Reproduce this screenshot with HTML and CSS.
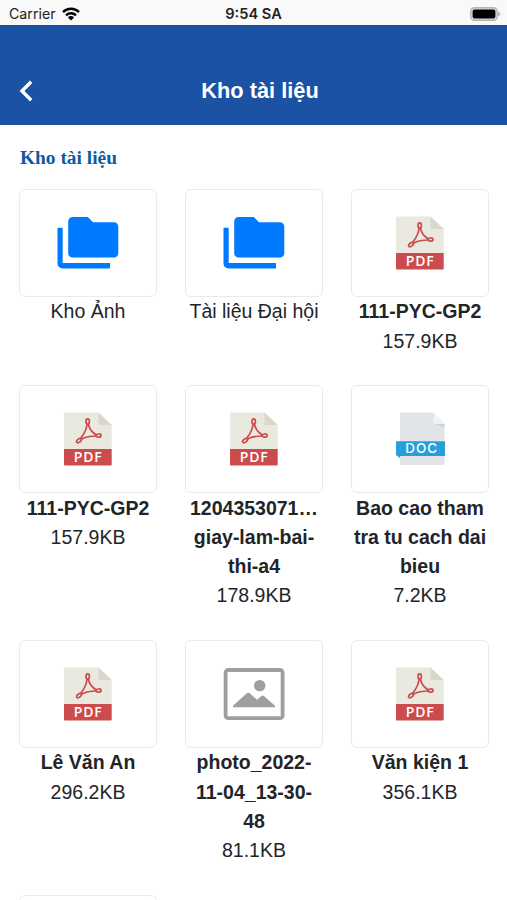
FILE: index.html
```html
<!DOCTYPE html>
<html lang="vi">
    <head>
        <title>Kho tài liệu</title>
        <meta charset="UTF-8">
        <meta name="viewport" content="width=device-width, initial-scale=1.0">
        <link rel="stylesheet" href="styles.css">
    </head>
    <body>
        <!-- shared icons -->
        <svg class="sprite">
            <symbol id="folder" viewBox="0 0 64 64">
                <path fill="#007bff" d="M16.5 6h15.3l5.2 5.3h21a4.3 4.3 0 0 1 4.3 4.3v26.7a4.3 4.3 0 0 1-4.3 4.3H16.5a4.3 4.3 0 0 1-4.3-4.3V10.3a4.3 4.3 0 0 1 4.3-4.3z"/>
                <path fill="#007bff" d="M1.5 16.7h5.2v35.2h47.3v5.5H6.5a5 5 0 0 1-5-5z"/>
            </symbol>
            <symbol id="pdf" viewBox="0 0 64 64">
                <path fill="#e9e9e0" d="M9 5.5h33.5L55.7 18v25H8V6.5a1 1 0 0 1 1-1z"/>
                <path fill="#d9d7ca" d="M42.5 5.5L55.7 18H42.5z"/>
                <path fill="#cc4b4c" d="M8 42h47.7v15.5a1 1 0 0 1-1 1H9a1 1 0 0 1-1-1z"/>
                <g class="swirl">
                    <ellipse cx="31.7" cy="14.5" rx="1.7" ry="2.6"/>
                    <ellipse cx="23" cy="33.6" rx="2.7" ry="1.6" transform="rotate(-38 23 33.6)"/>
                    <ellipse cx="42.7" cy="28.6" rx="2.4" ry="1.6" transform="rotate(-6 42.7 28.6)"/>
                    <path d="M31.1 17Q30.5 24 24.7 31.3M32.3 17Q34 24.5 40.5 28M25.2 32.2Q31.5 29 40.5 29"/>
                </g>
                <text class="tag tag-pdf" x="32.2" y="55.2">PDF</text>
            </symbol>
            <symbol id="doc" viewBox="0 0 64 64">
                <path fill="#e2e5e7" d="M12 5.5h33.5l11 11V58H12z"/>
                <path fill="#cad1d8" d="M47 17l9.5 4v-4z"/>
                <path fill="#f0f2f4" d="M45.5 5.5l11 11.5H47a1.5 1.5 0 0 1-1.5-1.5z"/>
                <path fill="#27a0da" d="M8 34.3h49V49H12v2l-4-3z"/>
                <text class="tag tag-doc" x="33.6" y="46.4">DOC</text>
            </symbol>
            <symbol id="image" viewBox="0 0 64 64">
                <rect x="3.6" y="8" width="57" height="48.2" rx="2.5" fill="none" stroke="#9e9e9e" stroke-width="3.8"/>
                <circle cx="37.7" cy="23.6" r="5.7" fill="#9e9e9e"/>
                <path fill="#9e9e9e" d="M11 45.3v-1.5l13.8-12.5q1.5-1.2 3 0l7.2 6.5 4.5-3.8q1.2-.9 2.4 0L53 43.8v1.5z"/>
            </symbol>
        </svg>

        <div class="status">
            <div class="carrier">
                <span>Carrier</span>
                <svg class="wifi" viewBox="0 0 18 14">
                    <path fill="none" stroke="#000" stroke-width="2.4" d="M1 5.1a11.4 11.4 0 0 1 16 0M4 8.3a7.2 7.2 0 0 1 10 0"/>
                    <path d="M9 13.6L5.9 10.4a4.4 4.4 0 0 1 6.2 0z"/>
                </svg>
            </div>
            <span class="clock">9:54 SA</span>
            <svg class="battery" viewBox="0 0 31 14">
                <rect x=".8" y=".8" width="26.4" height="12.4" rx="3.6" fill="#ddd" stroke="#b5b5b5" stroke-width="1.4"/>
                <rect x="2.6" y="2.6" width="22.8" height="8.8" rx="1.8"/>
                <path fill="#b5b5b5" d="M28.2 4.6q2.2.8 2.2 2.4t-2.2 2.4z"/>
            </svg>
        </div>

        <header class="navbar">
            <svg class="back" viewBox="0 0 14 22">
                <path fill="none" stroke="#fff" stroke-width="3.4" d="M12.2 1.8L3 11l9.2 9.2"/>
            </svg>
            <h1 class="title">Kho tài liệu</h1>
        </header>

        <main class="content">
            <h2 class="heading">Kho tài liệu</h2>
            <div class="grid">
                <div class="item">
                    <div class="card"><svg class="icon"><use href="#folder"/></svg></div>
                    <div>Kho Ảnh</div>
                </div>
                <div class="item">
                    <div class="card"><svg class="icon"><use href="#folder"/></svg></div>
                    <div>Tài liệu Đại hội</div>
                </div>
                <div class="item">
                    <div class="card"><svg class="icon"><use href="#pdf"/></svg></div>
                    <div class="name">111-PYC-GP2</div>
                    <div>157.9KB</div>
                </div>
                <div class="item">
                    <div class="card"><svg class="icon"><use href="#pdf"/></svg></div>
                    <div class="name">111-PYC-GP2</div>
                    <div>157.9KB</div>
                </div>
                <div class="item">
                    <div class="card"><svg class="icon"><use href="#pdf"/></svg></div>
                    <div class="name">1204353071…<br>giay-lam-bai-<br>thi-a4</div>
                    <div>178.9KB</div>
                </div>
                <div class="item">
                    <div class="card"><svg class="icon"><use href="#doc"/></svg></div>
                    <div class="name">Bao cao tham<br>tra tu cach dai<br>bieu</div>
                    <div>7.2KB</div>
                </div>
                <div class="item">
                    <div class="card"><svg class="icon"><use href="#pdf"/></svg></div>
                    <div class="name">Lê Văn An</div>
                    <div>296.2KB</div>
                </div>
                <div class="item">
                    <div class="card"><svg class="icon"><use href="#image"/></svg></div>
                    <div class="name">photo_2022-<br>11-04_13-30-<br>48</div>
                    <div>81.1KB</div>
                </div>
                <div class="item">
                    <div class="card"><svg class="icon"><use href="#pdf"/></svg></div>
                    <div class="name">Văn kiện 1</div>
                    <div>356.1KB</div>
                </div>
                <div class="item">
                    <div class="card"></div>
                </div>
            </div>
        </main>
    </body>
</html>
```
FILE: styles.css
```css
* {
    box-sizing: border-box;
}
body {
    margin: 0;
    height: 900px;
    overflow: hidden;
    display: flex;
    flex-direction: column;
    background-color: #fff;
    color: #212529;
    font-family: "Liberation Sans", Arial, sans-serif;
}
.sprite {
    display: none;
}

/* status bar */
.status {
    flex: none;
    height: 25px;
    padding: 2px 6px 0 9px;
    display: grid;
    grid-template-columns: 1fr auto 1fr;
    align-items: center;
    background-color: #f9f9f9;
    color: #222;
    font-family: Inter, sans-serif;
    font-size: 14.2px;
}
.carrier {
    display: flex;
    align-items: center;
    gap: 6px;
}
.wifi {
    width: 18px;
    height: 14px;
}
.clock {
    margin-right: 3px;
    font-size: 14.6px;
    font-weight: 600;
}
.battery {
    width: 31px;
    height: 14px;
    justify-self: end;
}

/* header */
.navbar {
    flex: none;
    height: 100px;
    padding: 31px 6px 0 19px;
    display: grid;
    grid-template-columns: 1fr auto 1fr;
    align-items: center;
    background-color: #1b52a4;
    color: #fff;
}
.back {
    width: 14px;
    height: 22px;
}
.title {
    margin: 0;
    font-size: 21.8px;
    line-height: 30px;
}

/* documents */
.content {
    flex: 1;
    min-height: 0;
    padding: 21px 18px 0 19px;
    overflow: hidden;
}
.heading {
    margin: 0 0 19px 1px;
    color: #0d5ca3;
    font-family: "Liberation Serif", "Times New Roman", serif;
    font-size: 19.4px;
    line-height: 24px;
}
.grid {
    display: grid;
    grid-template-columns: repeat(3, 138px);
    column-gap: 28px;
    row-gap: 29.4px;
}
.item {
    text-align: center;
    font-size: 19.5px;
    line-height: 29.3px;
    white-space: nowrap;
}
.card {
    height: 107.5px;
    margin-bottom: .8px;
    display: flex;
    align-items: center;
    justify-content: center;
    border: 1px solid #e9eaeb;
    border-radius: 6px;
}
.icon {
    width: 64px;
    height: 64px;
}
.name {
    font-weight: bold;
}
.swirl {
    fill: none;
    stroke: #cc4b4c;
    stroke-width: 1.7;
}
.tag {
    fill: #fff;
    text-anchor: middle;
}
.tag-pdf {
    font-family: "Open Sans", sans-serif;
    font-size: 14px;
    font-weight: 600;
    letter-spacing: .9px;
}
.tag-doc {
    font-family: Inter, sans-serif;
    font-size: 13.4px;
    font-weight: 500;
    letter-spacing: 1px;
}
```
